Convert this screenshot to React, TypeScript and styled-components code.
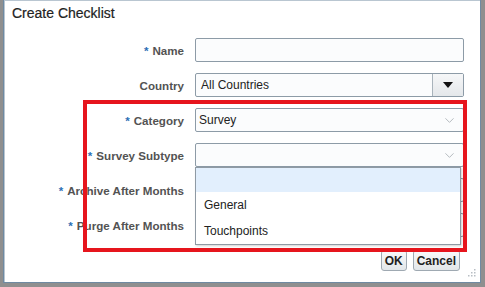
import { Fragment } from 'react';
import { ChevronDown } from 'lucide-react';
import styled, { createGlobalStyle } from 'styled-components';

const GlobalStyle = createGlobalStyle`
  html, body {
    margin: 0;
    padding: 0;
    background: #8f8f8f;
  }

  body {
    width: 485px;
    height: 287px;
    overflow: hidden;
    font-family: "Liberation Sans", Arial, sans-serif;
  }
`;

const Dialog = styled.div`
  position: relative;
  display: flex;
  flex-direction: column;
  box-sizing: border-box;
  width: 478px;
  height: 283px;
  margin-left: 3px;
  background: #fff;
  border: 1px solid #6f8aa2;
  border-top: none;
  box-shadow: 1px 1px 0 #b9c6d1 inset;
`;

const Title = styled.h1`
  box-sizing: border-box;
  height: 38px;
  margin: 0;
  padding: 5px 0 0 8px;
  font-size: 14px;
  font-weight: normal;
  color: #222;
  -webkit-text-stroke: 0.2px #222;
`;

const FormGrid = styled.div`
  display: grid;
  grid-template-columns: 180px 269px;
  grid-auto-rows: 24px;
  column-gap: 11px;
  row-gap: 11px;
  align-items: center;
`;

const Label = styled.label`
  text-align: right;
  font-size: 11.6px;
  font-weight: bold;
  color: #535353;
  white-space: nowrap;
`;

const Required = styled.span`
  margin-right: 4px;
  color: #2d6fb5;
`;

const Field = styled.div<{ $pad?: number }>`
  position: relative;
  display: flex;
  align-items: center;
  box-sizing: border-box;
  height: 24px;
  padding-left: ${(p) => p.$pad ?? 5}px;
  background: #fbfcfd;
  border: 1px solid #8d9ba7;
  border-radius: 2px;
  font-size: 12px;
  color: #222;
`;

const FieldText = styled.span`
  flex: 1;
`;

const ComboButton = styled.div`
  display: flex;
  align-items: center;
  justify-content: center;
  width: 30px;
  height: 100%;
  border-left: 1px solid #a9b3bb;
  background: linear-gradient(#f6f7f8, #e4e7ea);
`;

const Triangle = styled.span`
  width: 0;
  height: 0;
  border-left: 5px solid transparent;
  border-right: 5px solid transparent;
  border-top: 6px solid #111;
`;

const Chevron = styled(ChevronDown)`
  margin-right: 6px;
  color: #9ea4aa;
`;

const Popup = styled.ul`
  position: absolute;
  top: 100%;
  left: -1px;
  z-index: 2;
  box-sizing: border-box;
  width: 266px;
  margin: 1px 0 0;
  padding: 0;
  list-style: none;
  background: #fff;
  border: 1px solid #8f9aa4;
  box-shadow: 1px 1px 2px rgba(0, 0, 0, 0.18);
`;

const Option = styled.li<{ $active?: boolean; $h: number }>`
  display: flex;
  align-items: center;
  height: ${(p) => p.$h}px;
  padding-left: 8px;
  font-size: 12px;
  color: #222;
  background: ${(p) => (p.$active ? '#e2effd' : '#fff')};
`;

const ButtonBar = styled.div`
  display: flex;
  justify-content: flex-end;
  gap: 6px;
  margin-top: 13px;
  padding-right: 20px;
`;

const Button = styled.button`
  height: 21px;
  padding: 0 3px;
  font-family: inherit;
  font-size: 12px;
  font-weight: bold;
  color: #1f1f1f;
  background: linear-gradient(#f9fafb, #e2e6e9);
  border: 1px solid #9fa9b2;
  border-radius: 3px;
`;

const Highlight = styled.div`
  position: absolute;
  left: 79px;
  top: 100px;
  z-index: 3;
  box-sizing: border-box;
  width: 384px;
  height: 152px;
  border: 4px solid #e6151d;
  pointer-events: none;
`;

const Grip = styled.svg`
  position: absolute;
  right: 4px;
  bottom: 5px;
`;

const rows = [
  { label: 'Name', required: true },
  { label: 'Country' },
  { label: 'Category', required: true },
  { label: 'Survey Subtype', required: true },
  { label: 'Archive After Months', required: true },
  { label: 'Purge After Months', required: true },
];

const renderField = (label: string) => {
  if (label === 'Country') {
    return (
      <Field>
        <FieldText>All Countries</FieldText>
        <ComboButton>
          <Triangle />
        </ComboButton>
      </Field>
    );
  }
  if (label === 'Category') {
    return (
      <Field $pad={3}>
        <FieldText>Survey</FieldText>
        <Chevron size={15} strokeWidth={1.2} />
      </Field>
    );
  }
  if (label === 'Survey Subtype') {
    return (
      <Field>
        <FieldText />
        <Chevron size={15} strokeWidth={1.2} />
        <Popup>
          <Option $active $h={24} />
          <Option $h={26}>General</Option>
          <Option $h={26}>Touchpoints</Option>
        </Popup>
      </Field>
    );
  }
  return <Field />;
};

const App = () => {
  return (
    <>
      <GlobalStyle />
      <Dialog>
        <Title>Create Checklist</Title>
        <FormGrid>
          {rows.map((row) => (
            <Fragment key={row.label}>
              <Label>
                {row.required && <Required>*</Required>}
                {row.label}
              </Label>
              <div>{renderField(row.label)}</div>
            </Fragment>
          ))}
        </FormGrid>
        <ButtonBar>
          <Button>OK</Button>
          <Button>Cancel</Button>
        </ButtonBar>
        <Highlight />
        <Grip width="10" height="10" viewBox="0 0 10 10">
          {[
            [8, 2], [8, 5], [5, 5], [8, 8], [5, 8], [2, 8],
          ].map(([x, y]) => (
            <rect key={`${x}-${y}`} x={x} y={y} width="1.5" height="1.5" fill="#b8bec4" />
          ))}
        </Grip>
      </Dialog>
    </>
  );
};

export default App;
